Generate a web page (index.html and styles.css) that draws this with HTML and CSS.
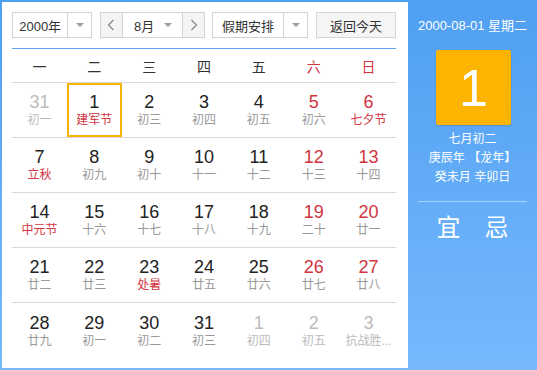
FILE: index.html
```html
<!DOCTYPE html>
<html lang="zh-CN">
<head>
    <meta charset="UTF-8">
    <title>万年历</title>
    <link rel="stylesheet" href="styles.css">
</head>
<body>
    <div class="calendar">
        <div class="main">
            <div class="controls">
                <div class="select year-select">
                    <span class="select-text">2000年</span>
                    <span class="select-arrow"><i class="caret"></i></span>
                </div>
                <div class="select month-select">
                    <span class="nav-btn">
                        <svg width="8" height="12" viewBox="0 0 8 12"><polyline points="6.5,1 1.5,6 6.5,11" fill="none" stroke="#888" stroke-width="1.2"/></svg>
                    </span>
                    <span class="select-text month-text">8月</span>
                    <span class="month-arrow"><i class="caret"></i></span>
                    <span class="nav-btn">
                        <svg width="8" height="12" viewBox="0 0 8 12"><polyline points="1.5,1 6.5,6 1.5,11" fill="none" stroke="#888" stroke-width="1.2"/></svg>
                    </span>
                </div>
                <div class="select holiday-select">
                    <span class="select-text">假期安排</span>
                    <span class="select-arrow"><i class="caret"></i></span>
                </div>
                <div class="today-btn">返回今天</div>
            </div>

            <div class="weekdays">
                <span>一</span><span>二</span><span>三</span><span>四</span><span>五</span>
                <span class="red">六</span><span class="red">日</span>
            </div>

            <div class="weeks">
                <div class="week">
                    <div class="day other"><b>31</b><small>初一</small></div>
                    <div class="day selected"><b>1</b><small class="fest">建军节</small></div>
                    <div class="day"><b>2</b><small>初三</small></div>
                    <div class="day"><b>3</b><small>初四</small></div>
                    <div class="day"><b>4</b><small>初五</small></div>
                    <div class="day weekend"><b>5</b><small>初六</small></div>
                    <div class="day weekend"><b>6</b><small class="fest">七夕节</small></div>
                </div>
                <div class="week">
                    <div class="day"><b>7</b><small class="fest">立秋</small></div>
                    <div class="day"><b>8</b><small>初九</small></div>
                    <div class="day"><b>9</b><small>初十</small></div>
                    <div class="day"><b>10</b><small>十一</small></div>
                    <div class="day"><b>11</b><small>十二</small></div>
                    <div class="day weekend"><b>12</b><small>十三</small></div>
                    <div class="day weekend"><b>13</b><small>十四</small></div>
                </div>
                <div class="week">
                    <div class="day"><b>14</b><small class="fest">中元节</small></div>
                    <div class="day"><b>15</b><small>十六</small></div>
                    <div class="day"><b>16</b><small>十七</small></div>
                    <div class="day"><b>17</b><small>十八</small></div>
                    <div class="day"><b>18</b><small>十九</small></div>
                    <div class="day weekend"><b>19</b><small>二十</small></div>
                    <div class="day weekend"><b>20</b><small>廿一</small></div>
                </div>
                <div class="week">
                    <div class="day"><b>21</b><small>廿二</small></div>
                    <div class="day"><b>22</b><small>廿三</small></div>
                    <div class="day"><b>23</b><small class="fest">处暑</small></div>
                    <div class="day"><b>24</b><small>廿五</small></div>
                    <div class="day"><b>25</b><small>廿六</small></div>
                    <div class="day weekend"><b>26</b><small>廿七</small></div>
                    <div class="day weekend"><b>27</b><small>廿八</small></div>
                </div>
                <div class="week">
                    <div class="day"><b>28</b><small>廿九</small></div>
                    <div class="day"><b>29</b><small>初一</small></div>
                    <div class="day"><b>30</b><small>初二</small></div>
                    <div class="day"><b>31</b><small>初三</small></div>
                    <div class="day other"><b>1</b><small>初四</small></div>
                    <div class="day other"><b>2</b><small>初五</small></div>
                    <div class="day other"><b>3</b><small>抗战胜...</small></div>
                </div>
            </div>
        </div>

        <div class="side">
            <div class="side-date">2000-08-01 星期二</div>
            <div class="big-day">1</div>
            <div class="lunar">
                <span>七月初二</span>
                <span>庚辰年 【龙年】</span>
                <span>癸未月 辛卯日</span>
            </div>
            <div class="yiji">
                <span>宜</span>
                <span>忌</span>
            </div>
        </div>
    </div>
</body>
</html>
```

FILE: styles.css
```css
body {
    margin: 0;
    padding: 0;
    font-family: 'Liberation Sans', 'Noto Sans CJK SC', sans-serif;
    color: #333;
}

.calendar {
    display: flex;
    width: 537px;
    height: 370px;
    box-sizing: border-box;
    padding: 2px 0 2px 2px;
    background: linear-gradient(#4f9ff2, #76b9fd);
}

.main {
    width: 406px;
    box-sizing: border-box;
    padding: 10px 12px 0 10px;
    background: #fff;
}

/* top controls */
.controls {
    display: flex;
    height: 26px;
    font-size: 13px;
}

.select {
    display: flex;
    box-sizing: border-box;
    height: 26px;
    border: 1px solid #d3d3d3;
    background: #fff;
}

.select-text {
    display: flex;
    align-items: center;
    justify-content: center;
    color: #333;
}

.select-arrow {
    display: flex;
    align-items: center;
    justify-content: center;
    width: 23px;
    border-left: 1px solid #d3d3d3;
}

.caret {
    width: 0;
    height: 0;
    border-left: 4px solid transparent;
    border-right: 4px solid transparent;
    border-top: 4px solid #999;
}

.year-select {
    width: 80px;
}

.year-select .select-text {
    width: 55px;
}

.month-select {
    width: 105px;
    margin-left: 8px;
}

.nav-btn {
    display: flex;
    align-items: center;
    justify-content: center;
    width: 21px;
    background: #f4f4f4;
}

.nav-btn:first-child {
    border-right: 1px solid #d3d3d3;
}

.nav-btn:last-child {
    border-left: 1px solid #d3d3d3;
}

.month-text {
    width: 40px;
    padding-left: 2px;
}

.month-arrow {
    display: flex;
    align-items: center;
    width: 19px;
}

.holiday-select {
    width: 96px;
    margin-left: 7px;
}

.holiday-select .select-text {
    width: 71px;
}

.today-btn {
    display: flex;
    align-items: center;
    justify-content: center;
    box-sizing: border-box;
    width: 82px;
    height: 26px;
    margin-left: 8px;
    border: 1px solid #d6d6d6;
    background: #f5f5f5;
    color: #333;
}

/* week header */
.weekdays {
    display: flex;
    height: 33px;
    margin-top: 10px;
    border-top: 1px solid #5ca4ee;
    border-bottom: 1px solid #d9d9d9;
    font-size: 14px;
}

.weekdays span {
    flex: 1;
    display: flex;
    align-items: center;
    justify-content: center;
}

.red {
    color: #d0343f;
}

/* days */
.week {
    display: flex;
    height: 55px;
    box-sizing: border-box;
    border-bottom: 1px solid #d9d9d9;
}

.week:last-child {
    border-bottom: none;
}

.day {
    flex: 1 1 0;
    display: flex;
    flex-direction: column;
    align-items: center;
    justify-content: center;
    box-sizing: border-box;
    padding-top: 1px;
}

.day b {
    font-weight: normal;
    font-size: 18px;
    line-height: 20px;
    color: #222;
}

.day small {
    font-size: 12px;
    line-height: 17px;
    color: #999;
}

.day.weekend b {
    color: #d0343f;
}

.day small.fest {
    color: #d0343f;
}

.day.other b,
.day.other small {
    color: #bbb;
}

.day.selected {
    box-shadow: inset 0 0 0 2px #f6b500;
}

/* right panel */
.side {
    flex: 1;
    display: flex;
    flex-direction: column;
    align-items: center;
    color: #fff;
}

.side-date {
    margin-top: 15px;
    font-size: 13px;
    line-height: 18px;
}

.big-day {
    display: flex;
    align-items: center;
    justify-content: center;
    width: 75px;
    height: 75px;
    margin-top: 15px;
    margin-left: 2px;
    background: #fdb400;
    border-radius: 2px;
    box-shadow: 0 1px 2px rgba(0, 0, 0, 0.15);
    font-size: 52px;
}

.lunar {
    display: flex;
    flex-direction: column;
    align-items: center;
    margin-top: 5px;
    font-size: 12px;
    line-height: 19px;
}

.yiji {
    display: flex;
    justify-content: center;
    gap: 24px;
    width: 109px;
    margin-top: 14px;
    padding-top: 11px;
    border-top: 1px solid rgba(255, 255, 255, 0.45);
    font-size: 24px;
    line-height: 30px;
}
```
